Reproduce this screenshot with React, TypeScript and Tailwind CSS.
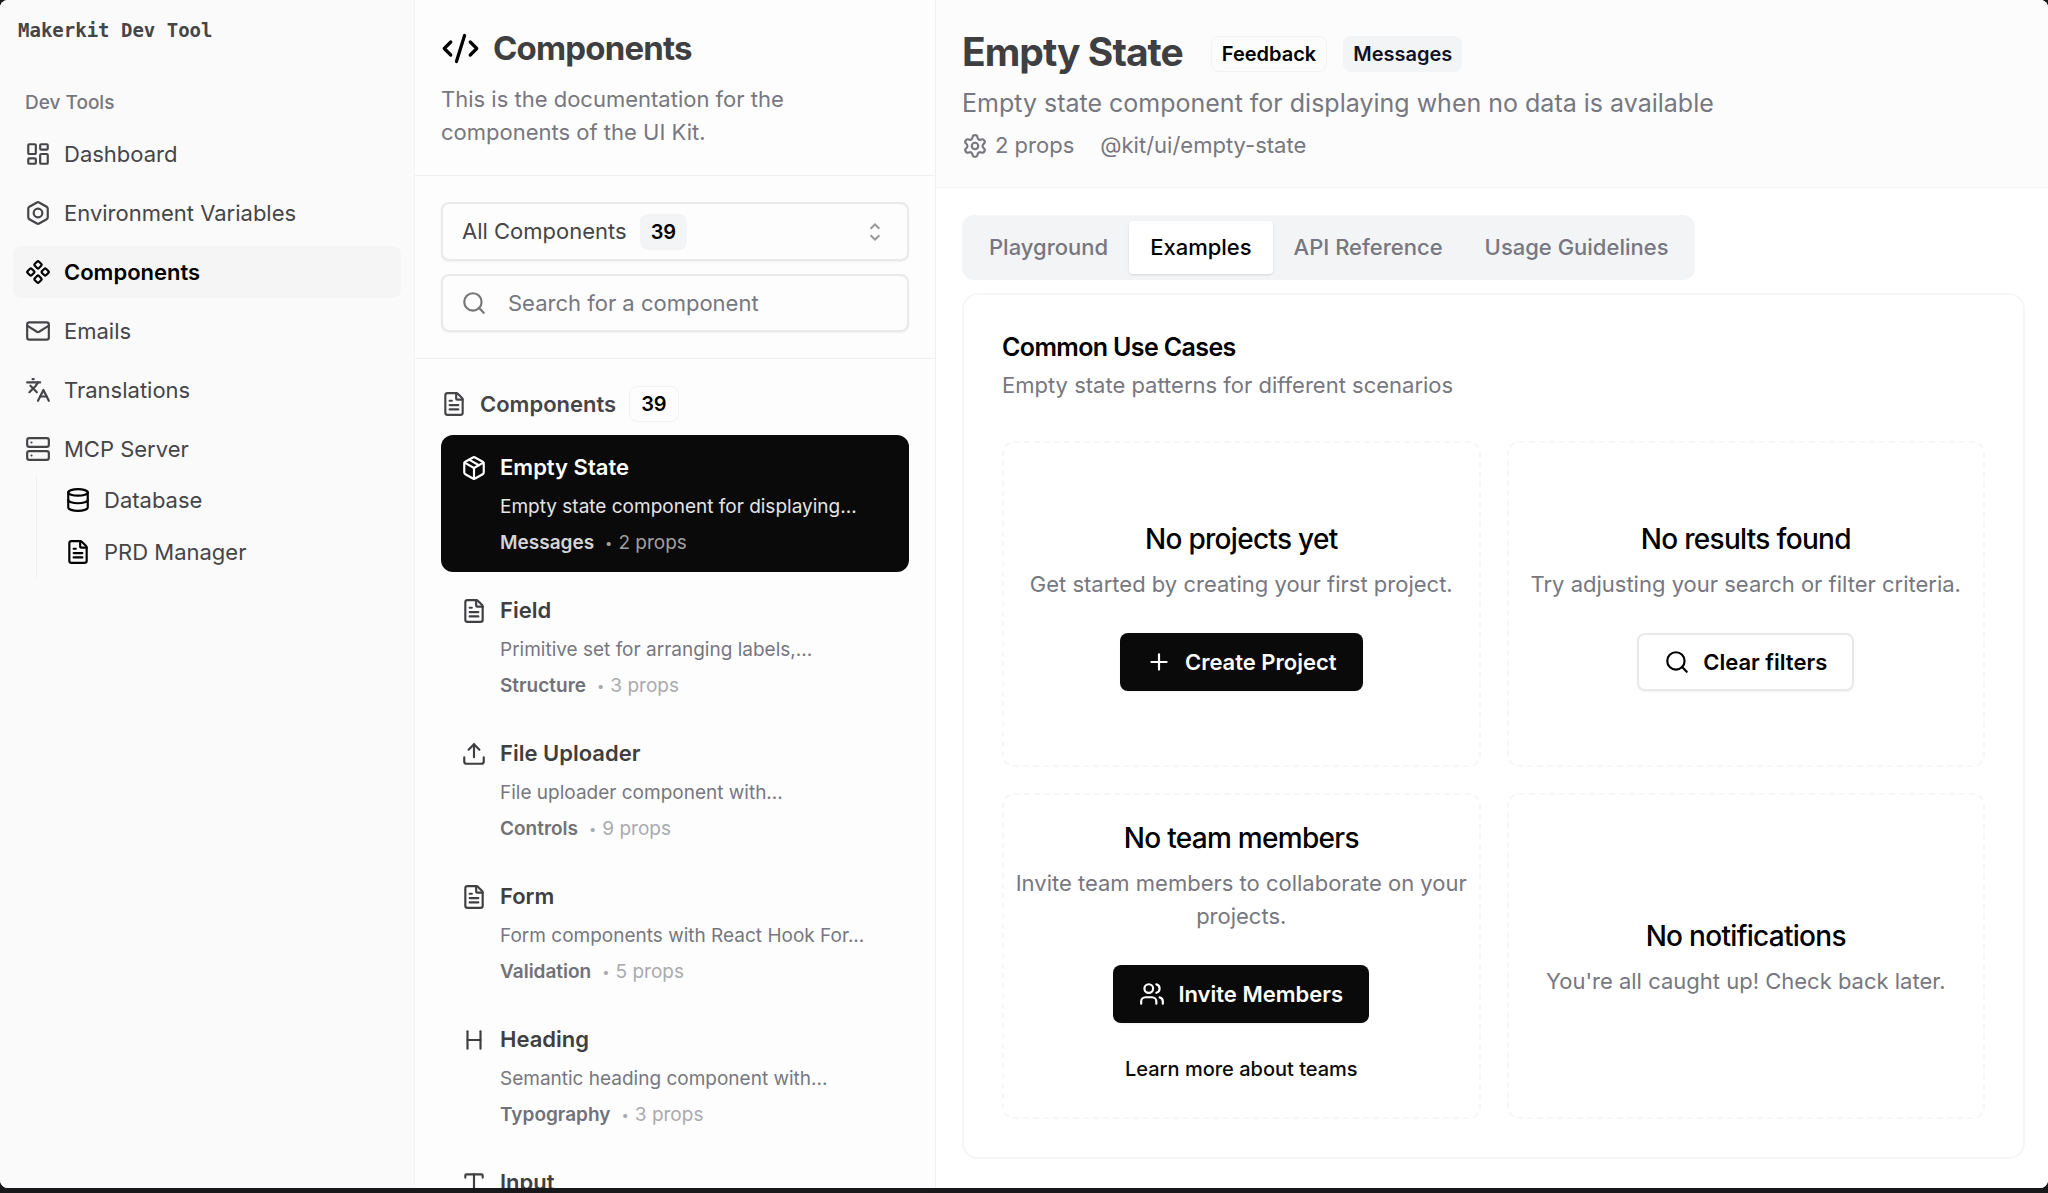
import { useState } from "react";
import type { ReactNode } from "react";
import type { LucideIcon } from "lucide-react";
import {
  Bolt,
  CodeXml,
  Component,
  Database,
  FileText,
  Heading,
  Languages,
  LayoutDashboard,
  Mail,
  Package,
  Plus,
  Search,
  Server,
  Settings,
  Type,
  Upload,
  Users,
} from "lucide-react";

interface NavItem {
  label: string;
  icon: LucideIcon;
}

interface ComponentItem {
  name: string;
  icon: LucideIcon;
  description?: string;
  category?: string;
  props?: number;
}

const navItems: NavItem[] = [
  { label: "Dashboard", icon: LayoutDashboard },
  { label: "Environment Variables", icon: Bolt },
  { label: "Components", icon: Component },
  { label: "Emails", icon: Mail },
  { label: "Translations", icon: Languages },
  { label: "MCP Server", icon: Server },
];

const mcpItems: NavItem[] = [
  { label: "Database", icon: Database },
  { label: "PRD Manager", icon: FileText },
];

const components: ComponentItem[] = [
  { name: "Empty State", description: "Empty state component for displaying...", category: "Messages", props: 2, icon: Package },
  { name: "Field", description: "Primitive set for arranging labels,...", category: "Structure", props: 3, icon: FileText },
  { name: "File Uploader", description: "File uploader component with...", category: "Controls", props: 9, icon: Upload },
  { name: "Form", description: "Form components with React Hook For...", category: "Validation", props: 5, icon: FileText },
  { name: "Heading", description: "Semantic heading component with...", category: "Typography", props: 3, icon: Heading },
  { name: "Input", icon: Type },
];

const tabs = ["Playground", "Examples", "API Reference", "Usage Guidelines"];

function Sidebar() {
  return (
    <aside className="flex w-[415px] shrink-0 flex-col border-r border-[#f3f3f4] bg-[#fafafa] px-[13px] text-[#454548]">
      <p className="px-[5px] pt-4 font-['DejaVu_Sans_Mono',monospace] text-[19px] leading-[28px] font-bold">
        Makerkit Dev Tool
      </p>
      <h2 className="mt-[43px] mb-[9px] px-3 text-[19px] leading-[32px] font-medium text-[#77777f]">
        Dev Tools
      </h2>
      <nav className="flex flex-col gap-[7px] text-[22px] leading-[33px]">
        {navItems.map(({ label, icon: Icon }) => (
          <a
            key={label}
            href="#"
            className={`flex h-[52px] items-center gap-[13px] rounded-lg px-3 ${
              label === "Components" ? "bg-[#f5f5f6] font-semibold text-black" : ""
            }`}
          >
            <Icon className="size-[26px]" />
            {label}
          </a>
        ))}
      </nav>
      <nav className="ml-[23px] flex flex-col gap-[6px] border-l border-[#f0f0f1] pt-[2px] pb-[3px] text-[22px]">
        {mcpItems.map(({ label, icon: Icon }) => (
          <a key={label} href="#" className="flex h-[46px] items-center gap-[13px] pl-7">
            <Icon className="size-[26px] text-black" />
            {label}
          </a>
        ))}
      </nav>
    </aside>
  );
}

function ComponentCard({ item, active, onSelect }: { item: ComponentItem; active: boolean; onSelect: () => void }) {
  const Icon = item.icon;

  return (
    <button
      onClick={onSelect}
      className={`flex w-full gap-[13px] rounded-xl px-5 py-4 text-left ${
        active ? "bg-[#0a0a0a] text-white" : "text-[#3f3f42]"
      }`}
    >
      <Icon className="mt-1 size-[26px] shrink-0" />
      <span className="flex min-w-0 flex-col gap-[10px]">
        <span className="text-[22px] leading-[33px] font-semibold">{item.name}</span>
        {item.description && (
          <span className={`truncate text-[19px] leading-[26px] ${active ? "text-[#e4e4e5]" : "text-[#77777f]"}`}>
            {item.description}
          </span>
        )}
        {item.category && (
          <span className="flex items-center gap-[6px] text-[19px] leading-[26px]">
            <span className={`mr-[5px] font-semibold ${active ? "text-[#d4d4d5]" : "text-[#717178]"}`}>
              {item.category}
            </span>
            <span className={`text-[13px] ${active ? "text-[#a0a0a0]" : "text-[#aaaaae]"}`}>•</span>
            <span className={active ? "text-[#a0a0a0]" : "text-[#aaaaae]"}>{item.props} props</span>
          </span>
        )}
      </span>
    </button>
  );
}

function ComponentList() {
  const [selected, setSelected] = useState("Empty State");

  return (
    <section className="flex w-[521px] shrink-0 flex-col overflow-hidden border-r border-[#f0f0f1] bg-[#fdfdfd]">
      <div className="border-b border-[#f0f0f1] p-[26px]">
        <h2 className="flex items-center gap-[13px] text-[33px] leading-[45px] font-bold tracking-tight text-[#3f3f42]">
          <CodeXml className="size-[39px] text-black" />
          Components
        </h2>
        <p className="mt-3 text-[22px] leading-[33px] text-[#77777f]">
          This is the documentation for the components of the UI Kit.
        </p>
      </div>

      {/* Filters */}
      <div className="flex flex-col gap-[13px] border-b border-[#f0f0f1] p-[26px]">
        <button
          aria-haspopup="listbox"
          className="flex h-[59px] items-center gap-[13px] rounded-lg border-2 border-[#e9e9ea] px-[19px] text-[22px] text-[#454548] shadow-xs"
        >
          All Components
          <span className="rounded-lg bg-[#f3f4f6] px-[11px] text-[20px] leading-[36px] font-semibold text-black">39</span>
          <svg viewBox="0 0 26 26" fill="none" stroke="#98989b" strokeWidth="2" className="ml-auto size-[26px]">
            <path d="M8.6 9.8 13 5.4l4.4 4.4M8.6 16.2l4.4 4.4 4.4-4.4" />
          </svg>
        </button>
        <label className="flex h-[58px] items-center gap-[21px] rounded-lg border-2 border-[#e9e9ea] px-[18px] shadow-xs">
          <Search className="size-[26px] shrink-0 text-[#77777a]" />
          <input
            type="text"
            aria-label="Search for a component"
            placeholder="Search for a component"
            className="min-w-0 flex-1 text-[22px] outline-none placeholder:text-[#77777f]"
          />
        </label>
      </div>

      {/* Component list */}
      <div className="px-[26px] pt-[27px]">
        <h3 className="mb-[13px] flex items-center gap-[13px] text-[22px] font-semibold text-[#454548]">
          <FileText className="size-[26px]" />
          Components
          <span className="rounded-lg border border-[#f3f3f4] px-[11px] text-[20px] leading-[34px] font-semibold text-black">
            39
          </span>
        </h3>
        <div className="flex flex-col gap-[6px]">
          {components.map((item) => (
            <ComponentCard
              key={item.name}
              item={item}
              active={item.name === selected}
              onSelect={() => setSelected(item.name)}
            />
          ))}
        </div>
      </div>
    </section>
  );
}

function EmptyState({ title, text, children }: { title: string; text: string; children?: ReactNode }) {
  return (
    <div className="flex min-h-[326px] flex-col items-center justify-center rounded-xl border-2 border-dashed border-[#f7f7f8] px-1 text-center">
      <h4 className="text-[28px] leading-[45px] font-medium tracking-tight text-black">{title}</h4>
      <p className="mt-[6px] text-[22px] leading-[33px] text-[#77777f]">{text}</p>
      {children}
    </div>
  );
}

function Details() {
  const [tab, setTab] = useState("Examples");

  return (
    <main className="flex min-w-0 flex-1 flex-col overflow-hidden bg-white">
      <header className="border-b border-[#f3f3f4] bg-[#fcfcfd] px-[26px] pt-[26px] pb-[25px]">
        <div className="flex items-center gap-7">
          <h1 className="text-[39px] leading-[52px] font-bold tracking-tight text-[#3f3f42]">Empty State</h1>
          <div className="flex gap-4 pt-1">
            <span className="rounded-lg border border-[#f3f3f4] px-[10px] text-[20px] leading-[34px] font-semibold text-black">
              Feedback
            </span>
            <span className="rounded-lg bg-[#f3f4f6] px-[10px] text-[20px] leading-[36px] font-semibold text-[#111127]">
              Messages
            </span>
          </div>
        </div>
        <p className="mt-[6px] text-[25px] leading-[39px] text-[#77777f]">
          Empty state component for displaying when no data is available
        </p>
        <div className="mt-[6px] flex items-center gap-[26px] text-[22px] leading-[33px] text-[#77777f]">
          <span className="flex items-center gap-[7px]">
            <Settings className="size-[26px]" />2 props
          </span>
          <span>@kit/ui/empty-state</span>
        </div>
      </header>

      <div className="flex flex-col gap-[13px] pt-[27px] pr-[23px] pb-[26px] pl-[26px]">
        <div role="tablist" className="flex self-start rounded-xl bg-[#f3f4f6] p-[6px]">
          {tabs.map((name) => (
            <button
              key={name}
              role="tab"
              aria-selected={name === tab}
              onClick={() => setTab(name)}
              className={`h-[53px] rounded-sm px-[21px] text-[22px] font-medium ${
                name === tab ? "bg-white text-black shadow-sm" : "text-[#77777f]"
              }`}
            >
              {name}
            </button>
          ))}
        </div>

        <section className="rounded-2xl border-2 border-[#f6f6f7] p-[38px]">
          <h2 className="text-[25px] leading-[28px] font-semibold tracking-tight text-black">Common Use Cases</h2>
          <p className="mt-2 text-[22px] leading-[33px] text-[#77777f]">
            Empty state patterns for different scenarios
          </p>
          <div className="mt-[39px] grid grid-cols-2 gap-[26px]">
            <EmptyState title="No projects yet" text="Get started by creating your first project.">
              <button className="mt-8 flex h-[58px] items-center gap-[13px] rounded-lg bg-[#0a0a0a] px-[26px] text-[22px] font-semibold text-white shadow-xs">
                <Plus className="size-[26px]" />
                Create Project
              </button>
            </EmptyState>
            <EmptyState title="No results found" text="Try adjusting your search or filter criteria.">
              <button className="mt-8 flex h-[58px] items-center gap-[13px] rounded-lg border-2 border-[#e9e9ea] bg-white px-[25px] text-[22px] font-semibold text-black shadow-xs">
                <Search className="size-[26px]" />
                Clear filters
              </button>
            </EmptyState>
            <EmptyState title="No team members" text="Invite team members to collaborate on your projects.">
              <button className="mt-8 flex h-[58px] items-center gap-[13px] rounded-lg bg-[#0a0a0a] px-[26px] text-[22px] font-semibold text-white shadow-xs">
                <Users className="size-[26px]" />
                Invite Members
              </button>
              <a href="#" className="mt-5 text-[20px] leading-[53px] font-medium text-[#0a0a0a]">
                Learn more about teams
              </a>
            </EmptyState>
            <EmptyState title="No notifications" text="You're all caught up! Check back later." />
          </div>
        </section>
      </div>
    </main>
  );
}

export default function App() {
  return (
    <div className="h-screen bg-[#18181a] pb-[5px] font-[Inter,sans-serif]">
      <div className="flex h-full overflow-hidden rounded-lg bg-white">
        <Sidebar />
        <ComponentList />
        <Details />
      </div>
    </div>
  );
}
